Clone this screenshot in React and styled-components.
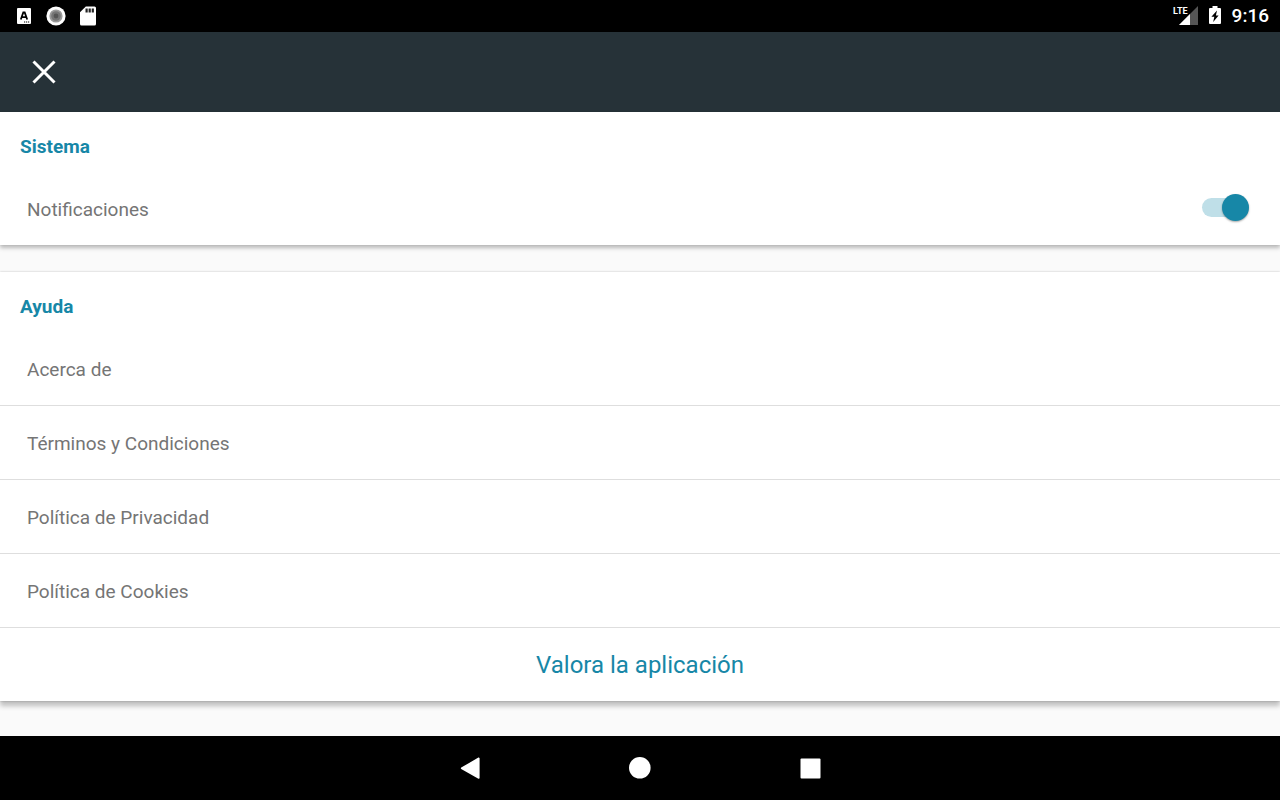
import React, { useState } from "react";
import styled, { createGlobalStyle } from "styled-components";

const GlobalStyle = createGlobalStyle`
  *, *::before, *::after { box-sizing: border-box; }
  body {
    margin: 0;
    background: #fafafa;
    font-family: Roboto, "Liberation Sans", sans-serif;
  }
`;

const Screen = styled.div`
  min-height: 100vh;
  display: flex;
  flex-direction: column;
`;

const StatusBar = styled.div`
  height: 32px;
  padding: 0 11px 0 16px;
  display: flex;
  align-items: center;
  justify-content: space-between;
  background: #000;
  color: #fff;
`;

const StatusGroup = styled.div`
  display: flex;
  align-items: center;
  gap: ${({ $gap }) => $gap}px;
`;

const Network = styled.span`
  display: flex;
  align-items: flex-start;
  height: 20px;
  font-size: 9px;
  line-height: 10px;
  font-weight: 700;

  svg { margin-left: -10px; }
`;

const Clock = styled.time`
  font-size: 19px;
  line-height: 24px;
  font-weight: 500;
`;

const AppBar = styled.header`
  height: 80px;
  padding: 0 24px;
  display: flex;
  align-items: center;
  background: #263238;
`;

const IconButton = styled.button`
  display: flex;
  align-items: center;
  justify-content: center;
  width: 40px;
  height: 40px;
  padding: 0;
  border: 0;
  background: none;
  color: #fff;
  cursor: pointer;
`;

const Content = styled.main`
  flex: 1;
  display: flex;
  flex-direction: column;
  gap: 27px;
  padding-bottom: 35px;
`;

const Card = styled.section`
  background: #fff;
  box-shadow: ${({ $raised }) =>
    $raised
      ? "0 5px 5px rgba(0, 0, 0, 0.24), 0 0 2px rgba(0, 0, 0, 0.24)"
      : "0 3px 4px rgba(0, 0, 0, 0.26), 0 0 1px rgba(0, 0, 0, 0.12)"};
`;

const CardTitle = styled.h2`
  margin: 0;
  padding: 21px 20px 11px;
  font-size: 19px;
  line-height: 28px;
  font-weight: 700;
  color: #1787a7;
`;

const SettingRow = styled.label`
  display: flex;
  align-items: center;
  justify-content: space-between;
  height: 73px;
  padding: 2px 31px 0 27px;
  font-size: 19px;
  line-height: 24px;
  color: #757575;
  cursor: pointer;
`;

const Switch = styled.input`
  appearance: none;
  display: grid;
  align-items: center;
  width: 47px;
  height: 27px;
  margin: 0 0 4px;
  cursor: pointer;

  &::before,
  &::after {
    content: "";
    grid-area: 1 / 1;
  }

  &::before {
    width: 39px;
    height: 19px;
    border-radius: 10px;
    background: ${({ checked }) => (checked ? "#bfdfe8" : "#c8c8c8")};
  }

  &::after {
    width: 27px;
    height: 27px;
    justify-self: ${({ checked }) => (checked ? "end" : "start")};
    border-radius: 50%;
    background: ${({ checked }) => (checked ? "#1787a7" : "#f1f1f1")};
    box-shadow: 0 1px 2px rgba(0, 0, 0, 0.35);
  }
`;

const LinkList = styled.ul`
  margin: 0;
  padding: 0;
  list-style: none;
`;

const LinkItem = styled.li`
  border-bottom: 1px solid #dedede;
`;

const RowLink = styled.a`
  display: flex;
  align-items: center;
  height: 73px;
  padding: 2px 27px 0;
  font-size: 19px;
  line-height: 24px;
  color: #757575;
  text-decoration: none;
`;

const RateButton = styled.button`
  display: block;
  width: 100%;
  height: 73px;
  padding: 0;
  border: 0;
  background: none;
  font-family: inherit;
  font-size: 24px;
  line-height: 28px;
  color: #1787a7;
  cursor: pointer;
`;

const NavBar = styled.nav`
  display: flex;
  align-items: center;
  justify-content: center;
  gap: 130px;
  height: 64px;
  background: #000;
`;

const KeyboardIcon = () => (
  <svg width="16" height="16" viewBox="0 0 16 16" aria-hidden="true">
    <rect x="1" y="0" width="14" height="16" rx="1" fill="#fff" />
    <path d="M4.8 11.5 7.3 4.5h1.4l2.5 7M5.8 9.2h4.4" fill="none" stroke="#000" strokeWidth="1.8" />
    <path d="M8 13.5h1.2v1H8zM10 13.5h1.2v1H10zM12 13.5h1.2v1H12z" fill="#000" />
  </svg>
);

const RecordIcon = () => (
  <svg width="20" height="20" viewBox="0 0 20 20" aria-hidden="true">
    <circle cx="10" cy="10" r="9.6" fill="#fff" />
    <circle cx="10" cy="10" r="6.6" fill="#9a9a9a" />
    <circle cx="10" cy="10" r="4.8" fill="#757575" />
    <circle cx="10" cy="10" r="2.4" fill="#555" />
  </svg>
);

const CardIcon = () => (
  <svg width="16" height="20" viewBox="0 0 16 20" aria-hidden="true">
    <path d="M5.8 0.5H14.5A1.5 1.5 0 0 1 16 2V18A1.5 1.5 0 0 1 14.5 19.5H1.5A1.5 1.5 0 0 1 0 18V6.2Z" fill="#fff" />
    <path d="M5.5 2.5h2.2V6.5H5.5zM8.6 2.5h2.2V6.5H8.6zM11.7 2.5h2.2V6.5h-2.2z" fill="#222" />
  </svg>
);

const SignalIcon = () => (
  <svg width="20" height="20" viewBox="0 0 20 20" aria-hidden="true">
    <path d="M20 0V19H1Z" fill="#555" />
    <path d="M12 8V19H1Z" fill="#fff" />
  </svg>
);

const BatteryIcon = () => (
  <svg width="12" height="20" viewBox="0 0 12 20" aria-hidden="true">
    <path d="M3.5 0h5v2H11a1 1 0 0 1 1 1v14a1 1 0 0 1-1 1H1a1 1 0 0 1-1-1v-14a1 1 0 0 1 1-1h2.5Z" fill="#fff" />
    <path d="M8 4.5 2.4 10.8h2.9L4.2 16l5.4-6.6H6.9Z" fill="#000" />
  </svg>
);

const CloseIcon = () => (
  <svg width="24" height="24" viewBox="0 0 24 24" aria-hidden="true">
    <path d="M1.5 1.5 22.5 22.5M22.5 1.5 1.5 22.5" stroke="#fff" strokeWidth="3" />
  </svg>
);

const BackIcon = () => (
  <svg width="20" height="22" viewBox="0 0 20 22" aria-hidden="true">
    <path d="M18.8 1.3V21L1.6 11.3Z" fill="#fff" stroke="#fff" strokeWidth="1.6" strokeLinejoin="round" />
  </svg>
);

const HomeIcon = () => (
  <svg width="22" height="22" viewBox="0 0 22 22" aria-hidden="true">
    <circle cx="10.8" cy="10.8" r="10.8" fill="#fff" />
  </svg>
);

const RecentsIcon = () => (
  <svg width="22" height="22" viewBox="0 0 22 22" aria-hidden="true">
    <rect x="1.5" y="1.5" width="20" height="20" rx="1" fill="#fff" />
  </svg>
);

const helpLinks = [
  { label: "Acerca de", href: "#acerca" },
  { label: "Términos y Condiciones", href: "#terminos" },
  { label: "Política de Privacidad", href: "#privacidad" },
  { label: "Política de Cookies", href: "#cookies" },
];

export default function App() {
  const [notifications, setNotifications] = useState(true);

  return (
    <Screen>
      <GlobalStyle />
      <StatusBar>
        <StatusGroup $gap={14}>
          <KeyboardIcon />
          <RecordIcon />
          <CardIcon />
        </StatusGroup>
        <StatusGroup $gap={11}>
          <Network>
            LTE
            <SignalIcon />
          </Network>
          <BatteryIcon />
          <Clock>9:16</Clock>
        </StatusGroup>
      </StatusBar>
      <AppBar>
        <IconButton type="button" aria-label="Cerrar">
          <CloseIcon />
        </IconButton>
      </AppBar>
      <Content>
        <Card>
          <CardTitle>Sistema</CardTitle>
          <SettingRow>
            Notificaciones
            <Switch
              type="checkbox"
              role="switch"
              checked={notifications}
              onChange={(event) => setNotifications(event.target.checked)}
            />
          </SettingRow>
        </Card>
        <Card $raised>
          <CardTitle>Ayuda</CardTitle>
          <LinkList>
            {helpLinks.map(({ label, href }) => (
              <LinkItem key={href}>
                <RowLink href={href}>{label}</RowLink>
              </LinkItem>
            ))}
          </LinkList>
          <RateButton type="button">Valora la aplicación</RateButton>
        </Card>
      </Content>
      <NavBar>
        <IconButton type="button" aria-label="Atrás">
          <BackIcon />
        </IconButton>
        <IconButton type="button" aria-label="Inicio">
          <HomeIcon />
        </IconButton>
        <IconButton type="button" aria-label="Recientes">
          <RecentsIcon />
        </IconButton>
      </NavBar>
    </Screen>
  );
}
